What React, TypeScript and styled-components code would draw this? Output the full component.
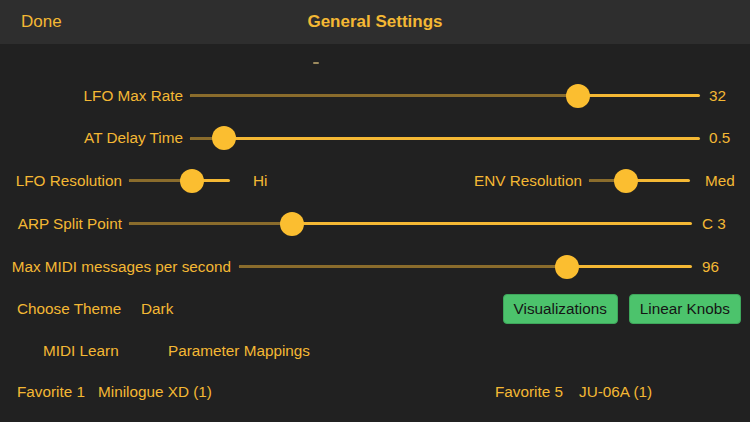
import styled, { createGlobalStyle } from 'styled-components';

const GlobalStyle = createGlobalStyle`
  html, body {
    margin: 0;
    padding: 0;
    background: #212121;
  }
  body {
    font-family: 'Liberation Sans', Arial, sans-serif;
  }
`;

const YELLOW = '#f4b834';

const Screen = styled.div`
  width: 750px;
  height: 422px;
  background: #212121;
  overflow: hidden;
  color: ${YELLOW};
  font-size: 15.3px;
`;

const Header = styled.div`
  height: 44px;
  background: #2e2e2e;
  display: grid;
  grid-template-columns: 1fr auto 1fr;
  align-items: center;
  padding: 0 21px;
`;

const HeaderButton = styled.span`
  font-size: 17px;
  color: ${YELLOW};
`;

const Title = styled.span`
  font-size: 17px;
  font-weight: 700;
  color: ${YELLOW};
`;

const ScrollHint = styled.div`
  height: 30px;
  padding-left: 313px;
  box-sizing: border-box;
  padding-top: 18px;

  &::before {
    content: '';
    display: block;
    width: 6px;
    height: 2px;
    border-radius: 1px;
    background: #9c8a5e;
  }
`;

const Row = styled.div<{ $h?: number; $pl?: number; $pr?: number }>`
  display: flex;
  align-items: center;
  height: ${({ $h }) => $h ?? 43}px;
  padding-left: ${({ $pl }) => $pl ?? 0}px;
  padding-right: ${({ $pr }) => $pr ?? 0}px;
  box-sizing: border-box;
  white-space: nowrap;
`;

const Label = styled.span<{ $w: number }>`
  width: ${({ $w }) => $w}px;
  flex-shrink: 0;
  text-align: right;
`;

const Value = styled.span<{ $w: number; $gap?: number }>`
  width: ${({ $w }) => $w}px;
  margin-left: ${({ $gap }) => $gap ?? 9}px;
  flex-shrink: 0;
`;

const Cell = styled.span<{ $w?: number }>`
  width: ${({ $w }) => ($w ? `${$w}px` : 'auto')};
  flex-shrink: 0;
`;

const Spacer = styled.div`
  flex: 1;
`;

const Track = styled.div<{ $w?: number; $gap?: number }>`
  position: relative;
  height: 3px;
  border-radius: 1.5px;
  background: ${YELLOW};
  margin-left: ${({ $gap }) => $gap ?? 7}px;
  ${({ $w }) => ($w ? `width: ${$w}px; flex-shrink: 0;` : 'flex: 1;')}
`;

const MinTrack = styled.div`
  position: absolute;
  left: 0;
  top: 0;
  bottom: 0;
  border-radius: 1.5px;
  background: #8a6c2c;
`;

const Thumb = styled.div`
  position: absolute;
  top: 50%;
  width: 24px;
  height: 24px;
  border-radius: 50%;
  background: #fbbe30;
  transform: translate(-50%, -50%);
`;

const GreenButton = styled.button`
  height: 30px;
  padding: 0 10px;
  border: 1px solid #3ea65b;
  border-radius: 4px;
  background: #4cc36c;
  color: #151515;
  font-family: inherit;
  font-size: 15.3px;
  cursor: pointer;
`;

const ButtonGroup = styled.div`
  display: flex;
  gap: 11px;
`;

type SliderProps = { value: number; width?: number; gap?: number };

const Slider = ({ value, width, gap }: SliderProps) => (
  <Track $w={width} $gap={gap}>
    <MinTrack style={{ width: `${value}%` }} />
    <Thumb style={{ left: `${value}%` }} />
  </Track>
);

export default function App() {
  return (
    <>
      <GlobalStyle />
      <Screen>
        <Header>
          <HeaderButton>Done</HeaderButton>
          <Title>General Settings</Title>
          <span />
        </Header>
        <ScrollHint />

        <Row>
          <Label $w={183}>LFO Max Rate</Label>
          <Slider value={76} />
          <Value $w={41}>32</Value>
        </Row>
        <Row $h={42}>
          <Label $w={183}>AT Delay Time</Label>
          <Slider value={6.7} />
          <Value $w={41}>0.5</Value>
        </Row>
        <Row>
          <Label $w={122}>LFO Resolution</Label>
          <Slider value={62} width={101} />
          <Value $w={30} $gap={23}>Hi</Value>
          <Spacer />
          <Label $w={120}>ENV Resolution</Label>
          <Slider value={36.6} width={101} />
          <Value $w={45} $gap={15}>Med</Value>
        </Row>
        <Row>
          <Label $w={122}>ARP Split Point</Label>
          <Slider value={29} />
          <Value $w={48} $gap={10}>C 3</Value>
        </Row>
        <Row>
          <Label $w={231}>Max MIDI messages per second</Label>
          <Slider value={72.4} gap={8} />
          <Value $w={48} $gap={10}>96</Value>
        </Row>

        <Row $h={42} $pl={17} $pr={9}>
          <Cell $w={124}>Choose Theme</Cell>
          <Cell>Dark</Cell>
          <Spacer />
          <ButtonGroup>
            <GreenButton>Visualizations</GreenButton>
            <GreenButton>Linear Knobs</GreenButton>
          </ButtonGroup>
        </Row>
        <Row $h={41} $pl={43}>
          <Cell $w={125}>MIDI Learn</Cell>
          <Cell>Parameter Mappings</Cell>
        </Row>
        <Row $h={41} $pl={17}>
          <Cell $w={81}>Favorite 1</Cell>
          <Cell $w={397}>Minilogue XD (1)</Cell>
          <Cell $w={84}>Favorite 5</Cell>
          <Cell>JU-06A (1)</Cell>
        </Row>
      </Screen>
    </>
  );
}
